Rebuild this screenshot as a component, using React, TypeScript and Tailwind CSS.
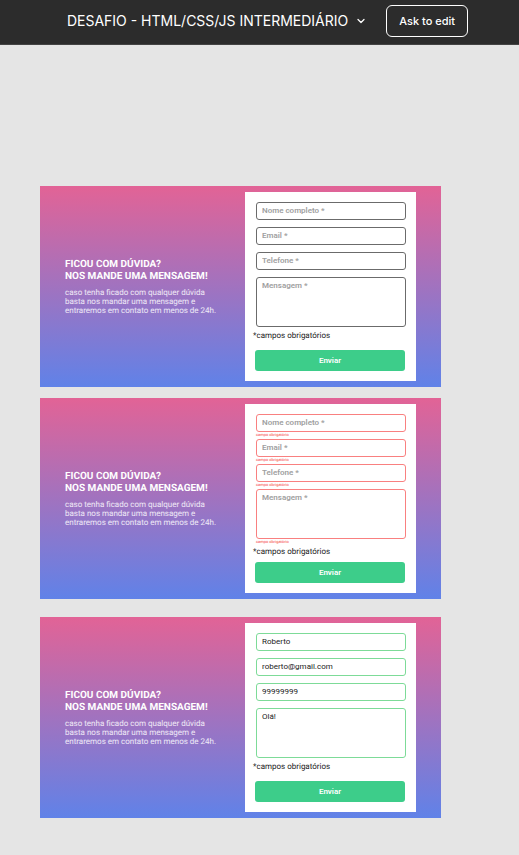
import { ChevronDown } from "lucide-react";

type Status = "idle" | "error" | "success";

const borders: Record<Status, string> = {
  idle: "border-[#6b6b6b]",
  error: "border-[#f98080]",
  success: "border-[#7ddb98]",
};

const fields = [
  { name: "nome", label: "Nome completo", type: "text", value: "Roberto" },
  { name: "email", label: "Email", type: "email", value: "roberto@gmail.com" },
  { name: "telefone", label: "Telefone", type: "tel", value: "99999999" },
];

const control =
  "block w-full rounded-[3px] border bg-white px-[5px] text-[8px] leading-[10px] text-[#222222] outline-none placeholder:font-semibold placeholder:text-[#a0a0a0] placeholder:opacity-100";

function FieldError({ show }: { show: boolean }) {
  return (
    <p className="h-[7px] text-[4px] leading-[5px] text-[#f53b3b]">
      {show ? "campo obrigatório" : null}
    </p>
  );
}

function ContactPanel({ status }: { status: Status }) {
  const filled = status === "success";
  const failed = status === "error";
  return (
    <section className="flex items-center bg-linear-to-b/srgb from-[#e26396] to-[#6082e8] px-[25px] py-[6px]">
      <div className="flex-1 text-white">
        <h2 className="text-[10px] leading-3 font-bold">
          FICOU COM DÚVIDA?
          <br />
          NOS MANDE UMA MENSAGEM!
        </h2>
        <p className="mt-[5px] text-[8px] leading-[9px] text-white/85">
          caso tenha ficado com qualquer dúvida
          <br />
          basta nos mandar uma mensagem e
          <br />
          entraremos em contato em menos de 24h.
        </p>
      </div>
      <form
        noValidate
        onSubmit={(event) => event.preventDefault()}
        className="w-[171px] shrink-0 bg-white py-[10px] pr-[10px] pl-2"
      >
        <div className="pl-[3px]">
          {fields.map((field) => (
            <div key={field.name}>
              <input
                type={field.type}
                name={field.name}
                aria-label={field.label}
                placeholder={`${field.label} *`}
                defaultValue={filled ? field.value : ""}
                className={`${control} ${borders[status]} h-[18px] pb-px`}
              />
              <FieldError show={failed} />
            </div>
          ))}
          <textarea
            name="mensagem"
            aria-label="Mensagem"
            placeholder="Mensagem *"
            defaultValue={filled ? "Olá!" : ""}
            className={`${control} ${borders[status]} h-[50px] resize-none pt-[3px]`}
          />
          {failed ? <FieldError show /> : null}
        </div>
        <p
          className={`text-[8px] leading-[10px] text-[#222222] ${failed ? "mt-px mb-[5px]" : "mt-1 mb-[9px]"}`}
        >
          *campos obrigatórios
        </p>
        <div className="pr-px pl-[2px]">
          <button
            type="submit"
            className="block h-[21px] w-full rounded-[3px] bg-[#3dcd8a] text-[8px] leading-[10px] font-semibold text-white"
          >
            Enviar
          </button>
        </div>
      </form>
    </section>
  );
}

export default function App() {
  return (
    <div className="min-h-screen bg-[#e5e5e5] font-['Roboto',sans-serif]">
      <header className="flex items-center justify-end border-b border-[#444444] bg-[#2c2c2c] pt-[5px] pr-[51px] pb-[7px] font-['Inter',sans-serif] text-white">
        <h1 className="text-[14px] leading-5 whitespace-nowrap">
          DESAFIO - HTML/CSS/JS INTERMEDIÁRIO
        </h1>
        <button type="button" aria-label="Opções do arquivo" className="ml-[7px]">
          <ChevronDown size={12} strokeWidth={2.5} />
        </button>
        <button
          type="button"
          className="ml-[19px] h-8 rounded-md border border-white px-3 text-[11px] leading-4 font-medium whitespace-nowrap"
        >
          Ask to edit
        </button>
      </header>
      <main className="flex flex-col pt-[141px] pr-[78px] pb-9 pl-10 [text-rendering:geometricPrecision]">
        <ContactPanel status="idle" />
        <div className="mt-[11px] mb-[18px]">
          <ContactPanel status="error" />
        </div>
        <ContactPanel status="success" />
      </main>
    </div>
  );
}
